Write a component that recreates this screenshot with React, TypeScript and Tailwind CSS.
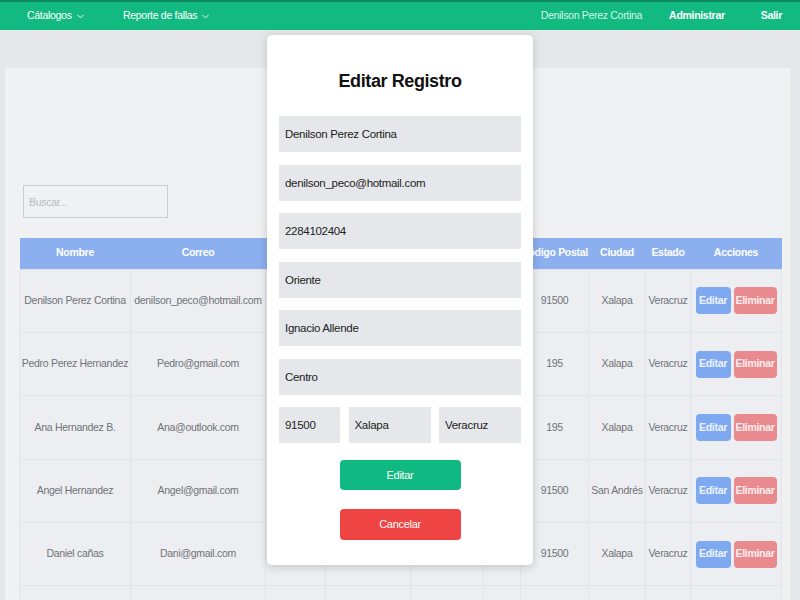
import React from 'react';
import { ChevronDown } from 'lucide-react';

const rows = [
  { nombre: 'Denilson Perez Cortina', correo: 'denilson_peco@hotmail.com', cp: '91500', ciudad: 'Xalapa', estado: 'Veracruz' },
  { nombre: 'Pedro Perez Hernandez', correo: 'Pedro@gmail.com', cp: '195', ciudad: 'Xalapa', estado: 'Veracruz' },
  { nombre: 'Ana Hernandez B.', correo: 'Ana@outlook.com', cp: '195', ciudad: 'Xalapa', estado: 'Veracruz' },
  { nombre: 'Angel Hernandez', correo: 'Angel@gmail.com', cp: '91500', ciudad: 'San Andrés', estado: 'Veracruz' },
  { nombre: 'Daniel cañas', correo: 'Dani@gmail.com', cp: '91500', ciudad: 'Xalapa', estado: 'Veracruz' },
  { nombre: '', correo: '', cp: '', ciudad: '', estado: '' },
];

const cols = ['w-[111px]', 'w-[135px]', 'w-[60px]', 'w-[85px]', 'w-[73px]', 'w-[37px]', 'w-[68px]', 'w-[57px]', 'w-[45px]', 'w-[91px]'];

const field = 'h-[36px] px-[6px] bg-[#e5e7eb] text-[11.5px] tracking-[-0.3px] text-[#222] outline-none';

const App: React.FC = () => {
  return (
    <div className="relative w-[800px] h-[600px] overflow-hidden bg-[#e5e7eb] font-['Liberation_Sans','Arial',sans-serif] tracking-[-0.3px]">
      {/* barra superior */}
      <nav className="h-[30px] bg-[#12b981] border-t-2 border-[#0e8a60] flex items-center text-[10.5px] text-white">
        <div className="w-[96px] ml-[27px] flex items-center gap-[3px]">
          <span>Cátalogos</span>
          <ChevronDown size={11} strokeWidth={2} />
        </div>
        <div className="flex items-center gap-[3px]">
          <span>Reporte de fallas</span>
          <ChevronDown size={11} strokeWidth={2} />
        </div>
        <div className="ml-auto flex items-center">
          <span className="text-[#d6f5e8]">Denilson Perez Cortina</span>
          <span className="ml-[27px] font-bold">Administrar</span>
          <span className="ml-[36px] mr-[18px] font-bold">Salir</span>
        </div>
      </nav>

      {/* contenido */}
      <div className="mt-[38px] ml-[2px] mr-[10px] h-[600px] bg-[#f0f1f3] border-l-[3px] border-[#e4e6e9]">
        <div className="pt-[117px] pl-[18px]">
          <input
            readOnly
            placeholder="Buscar..."
            className="w-[145px] h-[33px] px-[5px] bg-[#f0f1f3] border border-[#c9ccd1] text-[10.5px] placeholder:text-[#b8bcc2] outline-none"
          />
        </div>
        <table className="mt-[20px] ml-[14px] border-collapse table-fixed w-[762px] text-[10.5px]">
          <colgroup>
            {cols.map((c, i) => (
              <col key={i} className={c} />
            ))}
          </colgroup>
          <thead>
            <tr className="h-[31px] bg-[#8cb0ef] text-white font-bold">
              <th>Nombre</th>
              <th>Correo</th>
              <th>Teléfono</th>
              <th>Zona</th>
              <th>Calle</th>
              <th>Col.</th>
              <th className="whitespace-nowrap">Código Postal</th>
              <th>Ciudad</th>
              <th>Estado</th>
              <th>Acciones</th>
            </tr>
          </thead>
          <tbody>
            {rows.map((r, i) => (
              <tr key={i} className="h-[63.4px] bg-[#eceef1] text-[#707379] text-center">
                <td className="border border-[#e2e4e8] whitespace-nowrap">{r.nombre}</td>
                <td className="border border-[#e2e4e8] whitespace-nowrap">{r.correo}</td>
                <td className="border border-[#e2e4e8]" />
                <td className="border border-[#e2e4e8]" />
                <td className="border border-[#e2e4e8]" />
                <td className="border border-[#e2e4e8]" />
                <td className="border border-[#e2e4e8]">{r.cp}</td>
                <td className="border border-[#e2e4e8] whitespace-nowrap">{r.ciudad}</td>
                <td className="border border-[#e2e4e8]">{r.estado}</td>
                <td className="border border-[#e2e4e8]">
                  {r.nombre && (
                    <div className="flex justify-center gap-[3px]">
                      <button className="w-[35px] h-[27px] rounded bg-[#7ea8ef] text-[#eef4ff] font-bold">Editar</button>
                      <button className="w-[43px] h-[27px] rounded bg-[#e98a8e] text-[#fdeeee] font-bold">Eliminar</button>
                    </div>
                  )}
                </td>
              </tr>
            ))}
          </tbody>
        </table>
      </div>

      {/* modal */}
      <div className="absolute left-[267px] top-[35px] w-[266px] h-[530px] bg-white rounded-[5px] shadow-[0_2px_10px_rgba(0,0,0,0.18)] px-[12px]">
        <h2 className="mt-[31px] text-center text-[18px] leading-[30px] font-bold tracking-[-0.4px] text-[#111]">Editar Registro</h2>
        <div className="mt-[20px] flex flex-col gap-[12.5px]">
          {['Denilson Perez Cortina', 'denilson_peco@hotmail.com', '2284102404', 'Oriente', 'Ignacio Allende', 'Centro'].map((v) => (
            <input key={v} readOnly value={v} className={`${field} w-full`} />
          ))}
          <div className="flex gap-[8.5px]">
            <input readOnly value="91500" className={`${field} w-[61px]`} />
            <input readOnly value="Xalapa" className={`${field} w-[82px]`} />
            <input readOnly value="Veracruz" className={`${field} w-[82px]`} />
          </div>
        </div>
        <div className="mt-[17px] flex flex-col items-center gap-[19px]">
          <button className="w-[121px] h-[30px] rounded bg-[#10b981] text-white text-[11px]">Editar</button>
          <button className="w-[121px] h-[31px] rounded bg-[#ef4444] text-white text-[11px]">Cancelar</button>
        </div>
      </div>
    </div>
  );
};

export default App;
